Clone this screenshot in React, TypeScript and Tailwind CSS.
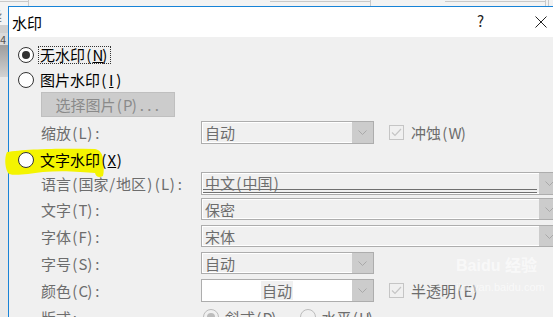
import React from 'react';

const font = { fontFamily: '"Noto Sans CJK SC", "Noto Sans", sans-serif' };

// SimSun-like spacing: half-width characters get a fixed 7.5px cell
function T({ s }: { s: string }) {
  return (
    <>
      {Array.from(s).map((c, i) =>
        c.charCodeAt(0) < 256 ? (
          <span key={i} className={`inline-block text-center ${c === 'W' || c === 'M' ? 'w-[11px]' : 'w-[7.5px]'}`}>
            {c}
          </span>
        ) : (
          <span key={i}>{c}</span>
        )
      )}
    </>
  );
}

function Chevron() {
  return (
    <svg width="9" height="5" viewBox="0 0 9 5" className="block">
      <polyline points="0.5,0.5 4.5,4.5 8.5,0.5" fill="none" stroke="#a9a9a9" strokeWidth="1" />
    </svg>
  );
}

function Radio({ checked = false, disabled = false }: { checked?: boolean; disabled?: boolean }) {
  const ring = disabled ? 'border-[#bcbcbc] bg-[#f0f0f0]' : 'border-[#333333] bg-white';
  return (
    <span className={`flex h-[16px] w-[16px] shrink-0 items-center justify-center rounded-full border ${ring}`}>
      {checked && <span className={`h-[8px] w-[8px] rounded-full ${disabled ? 'bg-[#bcbcbc]' : 'bg-[#333333]'}`} />}
    </span>
  );
}

function Check() {
  return (
    <span className="flex h-[15px] w-[15px] shrink-0 items-center justify-center border border-[#c5c5c5] bg-[#f0f0f0]">
      <svg width="11" height="9" viewBox="0 0 11 9">
        <polyline points="1,4.5 4,7.5 10,1" fill="none" stroke="#c5c5c5" strokeWidth="1.2" />
      </svg>
    </span>
  );
}

function Combo({ value, wide = false, white = false, underline = false }: { value: string; wide?: boolean; white?: boolean; underline?: boolean }) {
  return (
    <div
      className={`relative flex h-full shrink-0 border border-[#adadad] ${wide ? 'w-[360px]' : 'w-[173px]'} ${
        white ? 'bg-white' : 'bg-[#f0f0f0] shadow-[inset_0_0_0_1px_#ffffff]'
      }`}
    >
      {white ? (
        <div className="flex flex-1 items-center justify-center">
          <span className="bg-[#f0f0f0] px-[1px] text-[15px] leading-[19px] text-[#6d6d6d]">
            <T s={value} />
          </span>
        </div>
      ) : (
        <div className={`flex flex-1 pl-[3px] text-[15px] leading-none text-[#6d6d6d] ${underline ? 'items-start pt-[2px]' : 'items-center'}`}>
          <T s={value} />
        </div>
      )}
      {underline && <div className="absolute bottom-[1px] left-[1px] right-[23px] h-[4px] border-y border-[#6f6f6f]" />}
      <div className="flex w-[21px] items-center justify-center bg-[#cccccc]">
        <Chevron />
      </div>
    </div>
  );
}

function Row({ label, children, className = '' }: { label: string; children: React.ReactNode; className?: string }) {
  return (
    <div className={`flex items-stretch pl-[32px] ${className}`}>
      <div className="flex w-[160px] shrink-0 items-center whitespace-nowrap text-[15px] leading-none text-[#6d6d6d]">
        <T s={label} />
      </div>
      {children}
    </div>
  );
}

export default function App() {
  return (
    <div className="relative h-[317px] w-[553px] overflow-hidden bg-[#e9e9e9]" style={font}>
      {/* desktop behind the dialog */}
      <div className="absolute left-0 top-0 h-[6px] w-[553px] bg-[#f3f3f3]">
        <div className="absolute left-0 top-0 h-[2px] w-[28px] border-b border-[#c9c9c9]" />
        <div className="absolute left-[28px] top-0 h-[6px] w-px bg-[#c9c9c9]" />
        <div className="absolute left-[270px] top-0 h-[2px] w-[100px] border-b border-[#c9c9c9]" />
        <div className="absolute left-[370px] top-0 h-[6px] w-px bg-[#c9c9c9]" />
        <div className="absolute left-[445px] top-0 h-[2px] w-[100px] border-b border-[#c9c9c9]" />
        <div className="absolute left-[545px] top-0 h-[6px] w-px bg-[#c9c9c9]" />
        <div className="absolute left-[548px] top-0 h-[6px] w-px bg-[#c9c9c9]" />
      </div>
      <div className="absolute left-0 top-[6px] flex w-[8px] flex-col">
        <div className="h-[19px] overflow-hidden bg-[#f3f3f3] text-[15px] leading-[19px] text-[#777]">
          <span className="-ml-[6px]">纟</span>
        </div>
        <div className="h-[8px] bg-[#cfcfcf]" />
        <div className="h-[12px] overflow-hidden bg-[#dadada] text-[11px] leading-[12px] text-[#555]">4</div>
        <div className="h-[32px] bg-gradient-to-b from-[#9d9d9d] to-[#d3d3d3]" />
      </div>

      {/* dialog window */}
      <div className="absolute left-[8px] top-[6px] h-[330px] w-[560px] border-l border-t border-[#1883d7] bg-[#f0f0f0]">
        <div className="relative flex h-[30px] items-center bg-white">
          <span className="pl-[3px] text-[15px] leading-none text-black">水印</span>
          <span className="absolute left-[468px] top-[6px] text-[15px] leading-none text-[#222]">?</span>
          <svg className="absolute left-[526px] top-[9px]" width="12" height="12" viewBox="0 0 12 12">
            <path d="M0.5 0.5 L11.5 11.5 M11.5 0.5 L0.5 11.5" stroke="#222" strokeWidth="1" />
          </svg>
        </div>

        <div className="flex flex-col pt-[5px]">
          <div className="flex h-[25px] items-center pl-[9px]">
            <Radio checked />
            <span className="ml-[4px] whitespace-nowrap border border-dotted border-[#333] px-[1px] text-[15px] leading-[16px] text-black">
              <T s="无水印(" />
              <span className="inline-block w-[8.5px] text-center underline">N</span>
              <T s=")" />
            </span>
          </div>
          <div className="flex h-[25px] items-center pl-[9px]">
            <Radio />
            <span className="ml-[6px] whitespace-nowrap text-[15px] leading-none text-black">
              <T s="图片水印(" />
              <span className="inline-block w-[7.5px] text-center underline">I</span>
              <T s=")" />
            </span>
          </div>
          <div className="flex h-[25px] pl-[32px]">
            <div className="flex w-[134px] items-center justify-center whitespace-nowrap border border-[#bfbfbf] bg-[#cccccc] text-[15px] leading-none text-[#8a8a8a]">
              <T s="选择图片(P)..." />
            </div>
          </div>

          <Row label="缩放(L):" className="mt-[4px] h-[23px]">
            <Combo value="自动" />
            <div className="ml-[15px] flex items-center gap-[7px]">
              <Check />
              <span className="whitespace-nowrap text-[15px] leading-none text-[#6d6d6d]">
                <T s="冲蚀(W)" />
              </span>
            </div>
          </Row>

          <div className="relative mt-[3px] flex h-[25px] items-center pl-[9px]">
            <svg className="absolute left-[-6px] top-[-1px]" width="104" height="33" viewBox="0 0 104 33">
              <path
                d="M4 6 C 20 3, 60 2, 92 3 C 97 4, 100 8, 100 14 C 101 20, 101 26, 100 30 C 96 32, 93 31, 92 27 C 80 26, 60 24, 40 26 C 25 28, 12 30, 6 28 C 2 24, 1 12, 4 6 Z"
                fill="#f4f400"
              />
            </svg>
            <span className="relative">
              <Radio />
            </span>
            <span className="relative ml-[6px] whitespace-nowrap text-[15px] leading-none text-black">
              <T s="文字水印(" />
              <span className="inline-block w-[8px] text-center underline">X</span>
              <T s=")" />
            </span>
          </div>

          <Row label="语言(国家/地区)(L):" className="h-[23px]">
            <Combo value="中文(中国)" wide underline />
          </Row>
          <Row label="文字(T):" className="mt-[3px] h-[22px]">
            <Combo value="保密" wide />
          </Row>
          <Row label="字体(F):" className="mt-[5px] h-[22px]">
            <Combo value="宋体" wide />
          </Row>
          <Row label="字号(S):" className="mt-[5px] h-[22px]">
            <Combo value="自动" />
          </Row>
          <Row label="颜色(C):" className="mt-[5px] h-[23px]">
            <Combo value="自动" white />
            <div className="ml-[15px] flex items-center gap-[7px]">
              <Check />
              <span className="whitespace-nowrap text-[15px] leading-none text-[#6d6d6d]">
                <T s="半透明(E)" />
              </span>
            </div>
          </Row>
          <Row label="版式:" className="mt-[4px] h-[22px]">
            <div className="flex items-center pl-[2px]">
              <Radio checked disabled />
              <span className="ml-[6px] whitespace-nowrap text-[15px] leading-none text-[#6d6d6d]">
                <T s="斜式(D)" />
              </span>
              <span className="ml-[22px]">
                <Radio disabled />
              </span>
              <span className="ml-[6px] whitespace-nowrap text-[15px] leading-none text-[#6d6d6d]">
                <T s="水平(H)" />
              </span>
            </div>
          </Row>
        </div>
      </div>

      {/* baidu watermark */}
      <div className="pointer-events-none absolute left-[456px] top-[258px] flex flex-col items-start whitespace-nowrap text-white/60">
        <span className="text-[16px] font-bold leading-none" style={{ fontFamily: '"Liberation Sans", "Noto Sans CJK SC", sans-serif' }}>
          Baidu 经验
        </span>
        <span className="mt-[8px] text-[11px] leading-none" style={{ fontFamily: '"Liberation Sans", sans-serif' }}>
          jingyan.baidu.com
        </span>
      </div>
    </div>
  );
}
